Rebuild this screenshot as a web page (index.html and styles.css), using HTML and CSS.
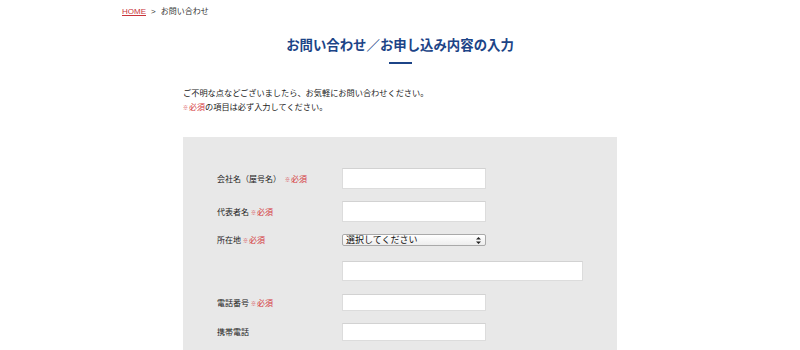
FILE: index.html
```html
<!DOCTYPE html>
<html lang="ja">
<head>
<meta charset="utf-8">
<title>お問い合わせ</title>
<link rel="stylesheet" href="styles.css">
</head>
<body>
<div class="page">
  <nav class="crumbs"><a href="#" class="crumb-home">HOME</a><span class="crumb-sep">&gt;</span><span>お問い合わせ</span></nav>
  <main class="content">
    <h1 class="title">お問い合わせ／お申し込み内容の入力</h1>
    <div class="title-rule"></div>
    <p class="intro">ご不明な点などございましたら、お気軽にお問い合わせください。<br><span class="req"><span class="mark">※</span>必須</span>の項目は必ず入力してください。</p>
    <form class="form-box">
      <div class="row row-1">
        <label class="label">会社名（屋号名）<span class="req req-gap"><span class="mark">※</span>必須</span></label>
        <input class="field" type="text">
      </div>
      <div class="row row-2">
        <label class="label">代表者名<span class="req"><span class="mark">※</span>必須</span></label>
        <input class="field" type="text">
      </div>
      <div class="row row-sel">
        <label class="label">所在地<span class="req"><span class="mark">※</span>必須</span></label>
        <span class="select-wrap">
          <select class="select"><option>選択してください</option></select>
          <svg class="select-arrow" width="5" height="7" viewBox="0 0 5 7"><path d="M2.5 0 L5 2.6 H0 Z M0 4.4 H5 L2.5 7 Z" fill="#222"/></svg>
        </span>
      </div>
      <div class="row row-addr">
        <span class="label"></span>
        <input class="field field-wide" type="text">
      </div>
      <div class="row row-tel">
        <label class="label">電話番号<span class="req"><span class="mark">※</span>必須</span></label>
        <input class="field field-short" type="text">
      </div>
      <div class="row row-mob">
        <label class="label">携帯電話</label>
        <input class="field field-short" type="text">
      </div>
    </form>
  </main>
</div>
</body>
</html>
```
FILE: styles.css
```css
* { box-sizing: border-box; }
html, body { margin: 0; padding: 0; background: #fff; }
body {
  font-family: "Noto Sans CJK JP", "Liberation Sans", sans-serif;
  color: #333;
}
.page { width: 556px; margin: 0 auto; }
.crumbs {
  display: block;
  padding-top: 6px;
  font-size: 8px;
  line-height: 10px;
  height: 16px;
  color: #333;
}
.crumb-home {
  color: #c8343a;
  text-decoration: underline;
  font-family: "Liberation Sans", sans-serif;
}
.crumb-sep { margin: 0 5px; font-family: "Liberation Sans", sans-serif; }
.content { width: 434px; margin: 0 auto; }
.title {
  margin: 18px 0 0;
  font-size: 13.4px;
  line-height: 20px;
  font-weight: bold;
  color: #1c4487;
  text-align: center;
  white-space: nowrap;
}
.title-rule {
  width: 23px;
  height: 2px;
  background: #1c4487;
  margin: 8px auto 0;
}
.intro {
  margin: 21px 0 0;
  font-size: 8.2px;
  line-height: 14px;
  color: #222;
}
.req { color: #d4363c; font-size: 8px; margin-left: 2px; }
.intro .req { margin-left: 0; }
.mark { font-size: 5px; line-height: 1; margin-right: 1px; vertical-align: 1px; }
.req-gap { margin-left: 4px; }
.form-box {
  margin-top: 23px;
  background: #e8e8e8;
  padding: 31px 0 40px 34px;
  display: flex;
  flex-direction: column;
}
.row { display: flex; align-items: center; }
.label {
  width: 125px;
  flex: none;
  font-size: 8px;
  line-height: 12px;
  color: #222;
}
.field {
  width: 144px;
  height: 21px;
  border: 1px solid #dcdcdc;
  border-top-color: #d2d2d2;
  background: #fff;
  padding: 0 4px;
  font-size: 9px;
  outline: none;
}
.row-2 { margin-top: 12px; }
.row-sel { margin-top: 12px; }
.row-addr { margin-top: 15px; }
.row-tel { margin-top: 13px; }
.row-mob { margin-top: 12px; }
.field-wide { width: 241px; height: 20px; }
.field-short { height: 17px; }
.row-mob .field { height: 18px; }
.select-wrap { position: relative; display: block; width: 144px; height: 12px; }
.select {
  -webkit-appearance: none;
  appearance: none;
  display: block;
  width: 144px;
  height: 12px;
  margin: 0;
  border: 1px solid #a9a9a9;
  border-radius: 2px;
  background: linear-gradient(#ffffff, #ededed);
  font-family: "Noto Sans CJK JP", sans-serif;
  font-size: 9px;
  line-height: 10px;
  padding: 0 0 0 3px;
  color: #111;
}
.select-arrow { position: absolute; right: 5px; top: 2.5px; }
```
